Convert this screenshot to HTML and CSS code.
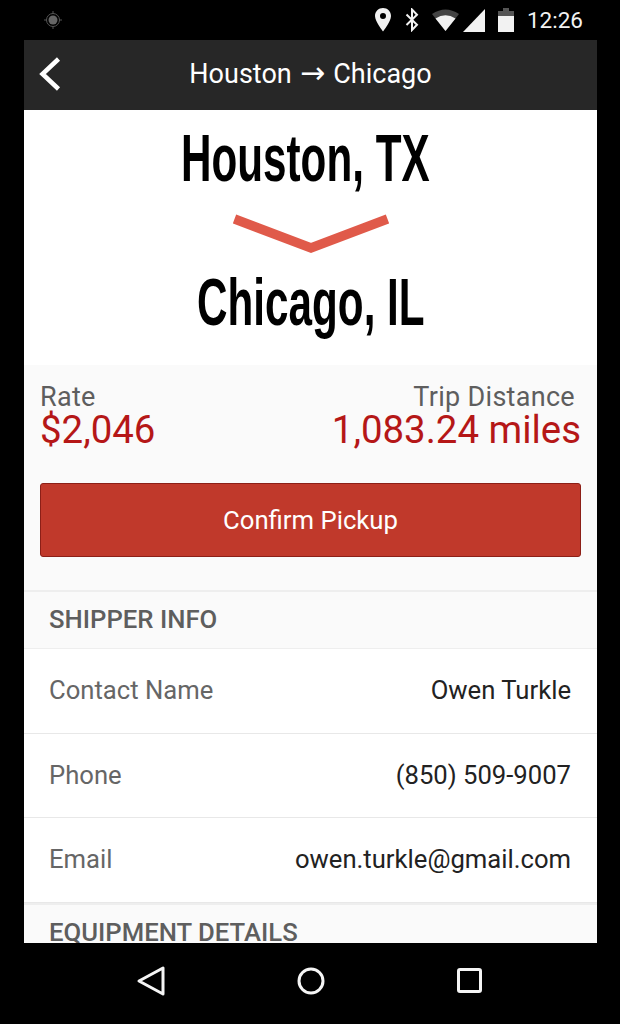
FILE: index.html
```html
<!DOCTYPE html>
<html>
<head>
    <title>Houston to Chicago</title>
    <link rel="stylesheet" href="styles.css">
</head>
<body>

<div class="status-bar">
  <svg class="gps" width="20" height="20" viewBox="0 0 20 20">
    <circle cx="10" cy="10" r="4.500" fill="#666"/>
    <circle cx="10" cy="10" r="6.500" fill="none" stroke="#555" stroke-width="1"/>
    <path d="M10 1v3M10 16v3M1 10h3M16 10h3" stroke="#555" stroke-width="1"/>
  </svg>
  <div class="status-right">
    <svg width="16" height="24" viewBox="0 0 16 24">
      <path fill-rule="evenodd" fill="#f2f2f2" d="M8 0C3.500 0 0 3.500 0 8c0 5.500 8 15.500 8 15.500S16 13.500 16 8c0-4.500-3.500-8-8-8zM8 5a3 3 0 1 1 0 6a3 3 0 0 1 0-6z"/>
    </svg>
    <svg class="bt" width="14" height="24" viewBox="0 0 14 24">
      <path d="M1.500 6.500L12 16.800l-5 5.200V1.500l5 5.200L1.500 17" fill="none" stroke="#f2f2f2" stroke-width="2"/>
    </svg>
    <svg class="wifi" width="27" height="24" viewBox="0 0 27 24">
      <path fill="#444" d="M0 6Q13.500-3 27 6L13.500 23z"/>
      <path fill="#f2f2f2" d="M3.500 10.500Q13.500 4 23.500 10.500L13.500 23z"/>
    </svg>
    <svg class="signal" width="22" height="24" viewBox="0 0 22 24">
      <path fill="#f2f2f2" d="M22 1v23H0z"/>
    </svg>
    <svg class="battery" width="16" height="24" viewBox="0 0 16 24">
      <path fill="#555" d="M5 0h6v3h5v5H0V3h5z"/>
      <path fill="#f2f2f2" d="M0 8h16v16H0z"/>
    </svg>
    <span class="clock">12:26</span>
  </div>
</div>

<div class="app">
  <div class="top-bar">
    <svg class="back" width="22" height="34" viewBox="0 0 22 34">
      <path d="M19.500 2L3.500 17l16 15" fill="none" stroke="#fff" stroke-width="4.500"/>
    </svg>
    <span class="title">Houston <span class="title-arrow">→</span> Chicago</span>
  </div>

  <div class="route">
    <div class="city city-from"><span>Houston, TX</span></div>
    <svg class="route-arrow" width="156" height="48" viewBox="0 0 156 48">
      <path d="M1.500 13L78 42l76.500-29" fill="none" stroke="#e05a4a" stroke-width="9.500"/>
    </svg>
    <div class="city"><span>Chicago, IL</span></div>
  </div>

  <div class="summary">
    <div class="figures">
      <div>
        <div class="figure-label">Rate</div>
        <div class="figure-value">$2,046</div>
      </div>
      <div class="figure-right">
        <div class="figure-label">Trip Distance</div>
        <div class="figure-value">1,083.24 miles</div>
      </div>
    </div>
    <button class="confirm">Confirm Pickup</button>
  </div>

  <div class="section-title">SHIPPER INFO</div>
  <div class="row"><span class="row-label">Contact Name</span><span>Owen Turkle</span></div>
  <div class="row"><span class="row-label">Phone</span><span>(850) 509-9007</span></div>
  <div class="row"><span class="row-label">Email</span><span>owen.turkle@gmail.com</span></div>
  <div class="section-title">EQUIPMENT DETAILS</div>
</div>

<div class="nav-bar">
  <svg width="30" height="32" viewBox="0 0 30 32">
    <path d="M27 3v26L3 16z" fill="none" stroke="#f5f5f5" stroke-width="3" stroke-linejoin="round"/>
  </svg>
  <svg width="30" height="30" viewBox="0 0 30 30">
    <circle cx="15" cy="15" r="12" fill="none" stroke="#f5f5f5" stroke-width="3"/>
  </svg>
  <svg width="27" height="27" viewBox="0 0 27 27">
    <rect x="2.500" y="2.500" width="22" height="22" rx="1.500" fill="none" stroke="#f5f5f5" stroke-width="3"/>
  </svg>
</div>

</body>
</html>
```

FILE: styles.css
```css
html, body {
    margin: 0;
    height: 1024px;
    overflow: hidden;
}
body {
    background-color: #000;
    font-family: Roboto, "Liberation Sans", sans-serif;
    display: flex;
    flex-direction: column;
}
.status-bar {
    height: 40px;
    flex: none;
    box-sizing: border-box;
    padding: 0 37px 0 43px;
    display: flex;
    align-items: center;
    justify-content: space-between;
}
.status-right {
    display: flex;
    align-items: center;
    color: #f2f2f2;
}
.status-right svg {
    display: block;
}
.bt {
    margin-left: 14px;
}
.wifi {
    margin-left: 13px;
}
.signal {
    margin-left: 4px;
}
.battery {
    margin-left: 13px;
}
.clock {
    margin-left: 13px;
    font-size: 22.500px;
}
.app {
    height: 903px;
    flex: none;
    margin: 0 23px 0 24px;
    background-color: #fff;
    overflow: hidden;
}
.top-bar {
    height: 70px;
    box-sizing: border-box;
    padding-bottom: 3px;
    background-color: #272727;
    color: #fff;
    font-size: 27px;
    line-height: 32px;
    display: flex;
    align-items: center;
    justify-content: center;
    position: relative;
}
.title-arrow {
    font-family: "DejaVu Sans", sans-serif;
    font-size: 30px;
    line-height: 20px;
    margin: 0 1.500px;
}
.back {
    position: absolute;
    left: 15px;
    top: 17px;
}
.route {
    height: 255px;
    display: flex;
    flex-direction: column;
    align-items: center;
}
.city {
    height: 96px;
    font-family: "Liberation Sans", sans-serif;
    font-weight: bold;
    font-size: 66px;
    line-height: 96px;
    color: #000;
    white-space: nowrap;
}
.city-from {
    margin-right: 11px;
}
/* no Oswald here, so squeeze the bold face to the same width */
.city span {
    display: inline-block;
    transform: scaleX(.64);
}
.route-arrow {
    display: block;
    flex: none;
}
.summary {
    height: 225px;
    box-sizing: border-box;
    background-color: #fafafa;
    padding: 18px 16px 0;
}
.figures {
    display: flex;
    justify-content: space-between;
}
.figure-right {
    text-align: right;
}
.figure-label {
    font-size: 27px;
    line-height: 28px;
    letter-spacing: .3px;
    color: #5e5e5e;
    padding-right: 6px;
}
.figure-value {
    font-size: 38.400px;
    line-height: 38px;
    color: #b51717;
}
.confirm {
    display: block;
    width: 541px;
    height: 74px;
    margin-top: 34px;
    background-color: #c0392b;
    border: 1px solid #8c1f17;
    border-radius: 3px;
    color: #fff;
    font-family: inherit;
    font-size: 25.700px;
}
.section-title {
    height: 59px;
    box-sizing: border-box;
    padding-left: 25px;
    background-color: #fafafa;
    border-top: 2px solid #eee;
    border-bottom: 1px solid #eee;
    color: #5e5e5e;
    font-size: 25.700px;
    font-weight: 500;
    line-height: 54px;
}
.row {
    height: 84.500px;
    box-sizing: border-box;
    padding: 0 26px 1px 25px;
    background-color: #fff;
    border-bottom: 1px solid #e8e8e8;
    display: flex;
    align-items: center;
    justify-content: space-between;
    font-size: 25.650px;
    color: #222;
}
.row-label {
    color: #666;
}
.nav-bar {
    height: 81px;
    flex: none;
    box-sizing: border-box;
    padding: 0 137px 6px 136px;
    display: flex;
    align-items: center;
    justify-content: space-between;
}
.nav-bar svg {
    display: block;
}
```
